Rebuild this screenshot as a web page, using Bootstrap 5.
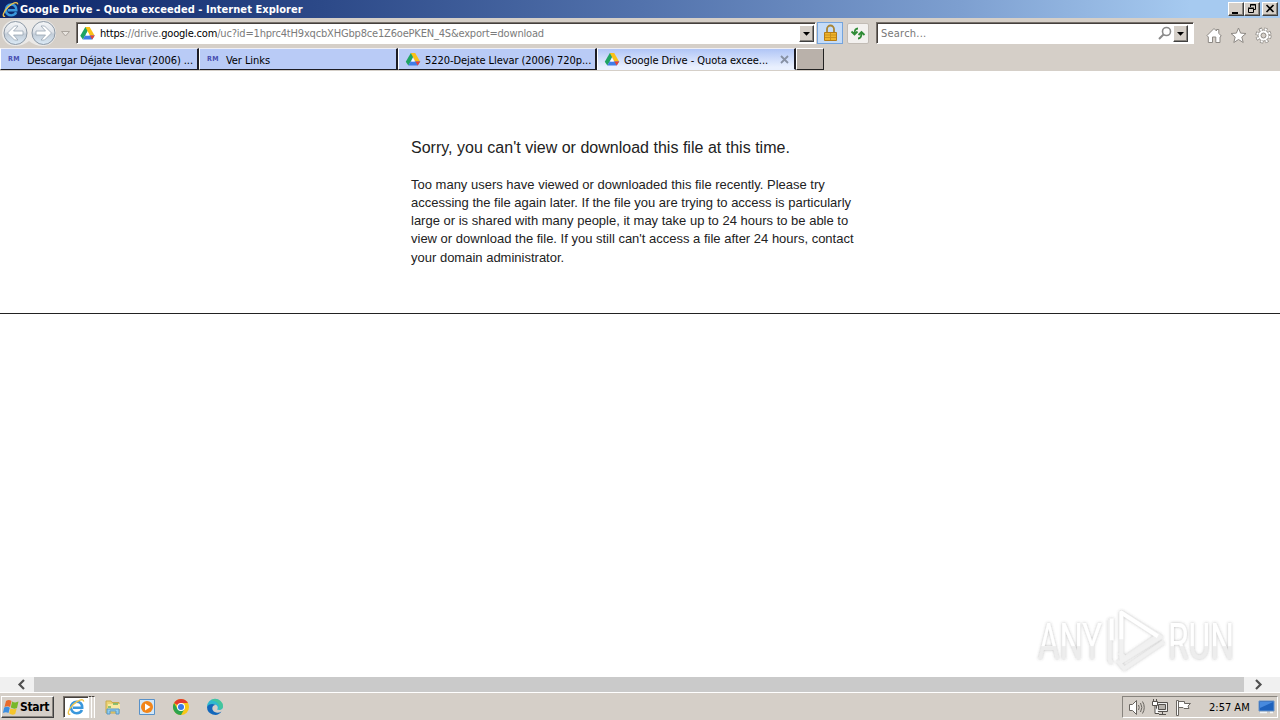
<!DOCTYPE html>
<html lang="en">

<head>
    <meta charset="UTF-8">
    <meta name="viewport" content="width=device-width, initial-scale=1.0">
    <title>Google Drive - Quota exceeded</title>
    <link href="https://cdn.jsdelivr.net/npm/bootstrap@5.3.0/dist/css/bootstrap.min.css" rel="stylesheet">
    <style>
        body {
            height: 720px;
            font: 11px/14px "DejaVu Sans Condensed", "DejaVu Sans", sans-serif;
            color: #000;
            background: #d5cfc8;
        }

        svg { display: block; flex: none; }

        /* title bar */
        .title-bar {
            height: 18px;
            padding: 0 2px 0 2px;
            background: linear-gradient(90deg, #0c2569 0%, #2c4988 25%, #5272ac 50%, #7d9fd0 75%, #a6caf0 93%);
        }
        .title-text { font-weight: bold; color: #fff; margin-left: 1px; padding-top: 1px; letter-spacing: .05px; }
        .raised {
            background: #d5cfc8;
            border: 1px solid;
            border-color: #fff #404040 #404040 #fff;
            box-shadow: inset -1px -1px #88847e;
            padding: 0;
            border-radius: 0;
        }
        .win-btn { width: 16px; height: 14px; }

        /* address row */
        .nav-row { height: 30px; padding-left: 2px; }
        .sunken {
            background: #fff;
            border: 1px solid;
            border-color: #77716b #fff #fff #77716b;
            box-shadow: inset 1px 1px #45403c;
            height: 22px;
        }
        .address { width: 740px; margin-left: 4px; padding: 1px 1px 1px 3px; }
        .address-text { color: #7b7b7b; margin-left: 5px; padding-top: 2px; letter-spacing: -.18px; }
        .drop-btn { width: 15px; height: 17px; }
        .search-box { width: 318px; margin-left: 7px; padding: 1px 2px 1px 4px; color: #777; }
        .search-hint { padding-top: 2px; letter-spacing: .22px; }
        .lock-btn { width: 26px; height: 22px; margin-left: 1px; background: #c5dcf8; border: 1px solid #74a4dd; }
        .refresh-btn { width: 22px; height: 21px; margin-left: 4px; background: #f3f1ef; border: 1px solid #c2bcb5; border-radius: 2px; }

        /* tabs */
        .tab-row { height: 23px; border-bottom: 1px solid #d5cfc8; }
        .page-tab {
            width: 199px;
            height: 22px;
            padding-left: 6px;
            background: #b9cbf6;
            border: solid;
            border-width: 1px 2px 1px 1px;
            border-color: #efeff5 #1c1c24 #1c1c24 #fff;
        }
        .page-tab.current {
            background: linear-gradient(#b0c5f6, #e9f0fe 90%);
            border-bottom-color: #e9f0fe;
        }
        .new-tab { width: 28px; height: 22px; background: #b9b1aa; border: 1px solid; border-color: #fff #222 #222 #fff; }
        .fav-rm { width: 16px; padding-left: 1px; font-size: 7px; font-weight: bold; letter-spacing: .4px; color: #474db0; line-height: 10px; }
        .tab-text { margin-left: 4px; padding-top: 3px; letter-spacing: -.07px; }

        /* page */
        .web-page { height: 606px; background: #fff; font-family: "Liberation Sans", Arial, sans-serif; color: #222; }
        .message { height: 243px; padding: 67px 0 0 411px; border-bottom: 1px solid #222; }
        .message-title { font-size: 16px; line-height: 20px; margin-bottom: 17.6px; letter-spacing: .015px; }
        .message-text { font-size: 13px; line-height: 18.3px; width: 460px; }
        .watermark { position: absolute; left: 1030px; top: 601px; }

        /* scrollbar */
        .h-scroll { height: 15px; background: #f0f0f0; }
        .h-scroll .arrow { width: 34px; padding-left: 13px; }
        .thumb { background: #cacaca; width: 1210px; }

        /* taskbar */
        .task-bar { height: 28px; padding: 3px 2px 0 1px; border-top: 1px solid #fff; }
        .start-btn { width: 53px; height: 22px; font-size: 12px; font-weight: bold; letter-spacing: -.3px; }
        .running { width: 26px; height: 22px; background: #fff; border: 1px solid; border-color: #77716b #fff #fff #77716b; box-shadow: inset 1px 1px #45403c; }
        .grip { width: 3px; height: 22px; background: #ddd8d2; border-right: 1px solid #fff; border-top: 1px solid #45403c; }
        .quick-launch { height: 22px; margin-left: 9px; gap: 16px; }
        .tray { width: 156px; height: 22px; padding: 0 2px 0 5px; border: 1px solid; border-color: #88847e #fff #fff #88847e; }
        .clock { margin-left: 17px; padding-top: 1px; }
    </style>
</head>

<body class="overflow-hidden">
    <!-- shared icons -->
    <svg width="0" height="0" class="position-absolute">
        <defs>
            <linearGradient id="ball" x2="0" y2="1">
                <stop offset="0" stop-color="#f4f6f8" />
                <stop offset=".45" stop-color="#e0e4ea" />
                <stop offset=".55" stop-color="#c2ccd7" />
                <stop offset="1" stop-color="#dcebf8" />
            </linearGradient>
            <symbol id="drive" viewBox="0 0 16 16">
                <path d="M5.700 1h4.600L5.600 10 3 14.500.3 10.500z" fill="#1fa463" />
                <path d="M5.700 1h4.600l5.400 9.500h-5z" fill="#fbc116" />
                <path d="M3 14.500l2.500-4.500h10.200L13 14.500z" fill="#3f7de8" />
                <path d="M10.500 10.200h5.200L13 14.500z" fill="#e84335" />
                <path d="M8 6.500l2 3.700H6z" fill="#fff" />
            </symbol>
            <symbol id="ie" viewBox="0 0 18 18">
                <path d="M15 12c-.9 2-2.900 3.200-5.300 3.200-3.300 0-5.700-2.400-5.700-5.700s2.400-5.700 5.700-5.700c3.600 0 5.700 2.500 5.500 6H6" fill="none" stroke="#3a97dc" stroke-width="2.600" />
                <path d="M5.200 8.200c.8-2.400 2.300-3.500 4.500-3.500" fill="none" stroke="#8ed4fb" stroke-width="1" />
                <path d="M3.300 16.300C-.3 17 1.200 11.500 6 6.800 10.500 2.300 16.800-.2 16.600 3.600" fill="none" stroke="#efc34a" stroke-width="1.400" />
            </symbol>
        </defs>
    </svg>

    <div class="title-bar d-flex align-items-center">
        <svg width="17" height="17"><use href="#ie" /></svg>
        <span class="title-text text-nowrap">Google Drive - Quota exceeded - Internet Explorer</span>
        <div class="d-flex ms-auto">
            <div class="raised win-btn"><svg width="14" height="12"><path d="M3 9h6v2H3z" /></svg></div>
            <div class="raised win-btn"><svg width="14" height="12"><path d="M5.500 4V1.500h5v5H9M5 2h6M3.500 5.500h5v4h-5zM3 5h6" fill="none" stroke="#000" /></svg></div>
            <div class="raised win-btn" style="margin-left: 2px"><svg width="14" height="12"><path d="M3.500 2l7 7m0-7l-7 7" stroke="#000" stroke-width="1.600" /></svg></div>
        </div>
    </div>

    <div class="nav-row d-flex align-items-center">
        <svg width="70" height="28" viewBox="0 0 70 28">
            <path d="M13 1h28a13 13 0 0 1 0 26q-8 0-14-5-6 5-14 5a13 13 0 0 1 0-26z" fill="#ebe9e7" />
            <g fill="url(#ball)" stroke="#8d99a6">
                <circle cx="13.500" cy="14" r="11.500" />
                <circle cx="41.500" cy="14" r="11.500" />
            </g>
            <g fill="#fff" stroke="#98a5b2" stroke-width=".8">
                <path d="M5.500 14l7-7H16L11.500 12H21v4h-9.500l4.500 5h-3.500z" />
                <path d="M49.500 14l-7-7H39l4.500 5H34v4h9.500L39 21h3.500z" />
            </g>
            <path d="M59.500 12.500h8l-4 4.500z" fill="#e8e4df" stroke="#aaa49d" />
        </svg>
        <div class="sunken address d-flex align-items-center">
            <svg width="15" height="15"><use href="#drive" /></svg>
            <span class="address-text text-nowrap"><span class="text-black">https</span>://drive.<span class="text-black">google.com</span>/uc?id=1hprc4tH9xqcbXHGbp8ce1Z6oePKEN_4S&amp;export=download</span>
            <div class="raised drop-btn ms-auto"><svg width="13" height="15"><path d="M3 6h7L6.500 9.800z" /></svg></div>
        </div>
        <div class="lock-btn d-flex justify-content-center align-items-center">
            <svg width="15" height="18" viewBox="0 0 15 18">
                <path d="M4 9V5a3.500 3.500 0 0 1 7 0v4" fill="none" stroke="#a88535" stroke-width="1.800" />
                <path d="M1.500 8.500h12v8h-12z" fill="#efb52c" stroke="#b57c17" />
                <path d="M2 11h11M2 13.500h11M7.500 9v7" stroke="#cb911c" />
            </svg>
        </div>
        <div class="refresh-btn d-flex justify-content-center align-items-center">
            <svg width="16" height="15" viewBox="0 0 16 15" fill="none" stroke="#2f8c36" stroke-width="1.800">
                <path d="M8 2.500C5.500 2.500 4.500 4 4.500 8M1.500 5.500l3 3 3-3M8 12.500c2.500 0 3.500-1.500 3.500-5.500M8.500 9l3-3 3 3" />
            </svg>
        </div>
        <div class="sunken search-box d-flex align-items-center">
            <span class="search-hint">Search...</span>
            <svg class="ms-auto" width="14" height="15" viewBox="0 0 14 15" fill="none" stroke="#8a8a8a">
                <circle cx="8.500" cy="5.500" r="4" stroke-width="1.600" />
                <path d="M5.500 8.500l-4.500 4.500" stroke-width="2" />
            </svg>
            <div class="raised drop-btn" style="margin: 0 3px 0 1px"><svg width="13" height="15"><path d="M3 6h7L6.500 9.800z" /></svg></div>
        </div>
        <div class="d-flex ms-auto gap-2 pt-1 pe-2">
            <svg width="16" height="17" viewBox="0 0 16 17"><path d="M1 8.500L8 1.500l2.500 2.500V2.500h2.300v3.800L15.300 9l-1.300 1v5.500H9.800V10H6.500v5.500H2.300V10z" fill="#fff" stroke="#8d8984" /></svg>
            <svg width="17" height="17" viewBox="0 0 17 17"><path d="M8.500 1l2.100 5.100 5.400.4-4.200 3.500 1.400 5.500-4.700-3-4.700 3 1.400-5.500L1 6.500l5.400-.4z" fill="#fff" stroke="#8d8984" /></svg>
            <svg width="17" height="17" viewBox="0 0 17 17">
                <circle cx="8.500" cy="8.500" r="6.500" fill="none" stroke="#8d8984" stroke-width="3.200" stroke-dasharray="3 2.105" />
                <circle cx="8.500" cy="8.500" r="5.500" fill="#fff" stroke="#8d8984" />
                <circle cx="8.500" cy="8.500" r="6.300" fill="none" stroke="#fff" stroke-width="2" stroke-dasharray="2 2.948" stroke-dashoffset="-.5" />
                <circle cx="8.500" cy="8.500" r="2.500" fill="#d5cfc8" stroke="#8d8984" />
            </svg>
        </div>
    </div>

    <div class="tab-row d-flex">
        <div class="page-tab d-flex align-items-center">
            <span class="fav-rm">RM</span><span class="tab-text text-nowrap">Descargar Déjate Llevar (2006) ...</span>
        </div>
        <div class="page-tab d-flex align-items-center">
            <span class="fav-rm">RM</span><span class="tab-text">Ver Links</span>
        </div>
        <div class="page-tab d-flex align-items-center">
            <svg width="16" height="15"><use href="#drive" /></svg><span class="tab-text text-nowrap">5220-Dejate Llevar (2006) 720p...</span>
        </div>
        <div class="page-tab current d-flex align-items-center">
            <svg width="16" height="15"><use href="#drive" /></svg><span class="tab-text text-nowrap">Google Drive - Quota excee...</span>
            <svg class="ms-auto me-1" width="11" height="11"><path d="M2 2l7 7m0-7L2 9" stroke="#8791a3" stroke-width="1.800" /></svg>
        </div>
        <div class="new-tab"></div>
    </div>

    <main class="web-page">
        <div class="message">
            <p class="message-title">Sorry, you can't view or download this file at this time.</p>
            <p class="message-text mb-0">Too many users have viewed or downloaded this file recently. Please try<br>
                accessing the file again later. If the file you are trying to access is particularly<br>
                large or is shared with many people, it may take up to 24 hours to be able to<br>
                view or download the file. If you still can't access a file after 24 hours, contact<br>
                your domain administrator.</p>
        </div>
        <svg class="watermark" width="248" height="75" viewBox="0 0 248 75">
            <defs>
                <filter id="soft" x="-10%" y="-10%" width="120%" height="120%">
                    <feDropShadow dx="0" dy="0" stdDeviation="1.600" flood-color="#555" flood-opacity=".4" />
                </filter>
                <linearGradient id="fade" x2="0" y2="1">
                    <stop offset=".56" stop-color="#fff" />
                    <stop offset=".58" stop-color="#ededed" />
                </linearGradient>
            </defs>
            <g filter="url(#soft)" fill="url(#fade)" font-family="Roboto, sans-serif" font-size="50" font-weight="400">
                <text x="8" y="58" textLength="64" lengthAdjust="spacingAndGlyphs">ANY</text>
                <text x="138" y="58" textLength="66" lengthAdjust="spacingAndGlyphs">RUN</text>
            </g>
            <g transform="translate(3 -3) scale(.96 .98)">
                <g filter="url(#soft)" fill="none" stroke="#fff" stroke-linejoin="round">
                    <path d="M80 22v41q0 3 3 1.500M88 64l7 8 41-27M90 56l6 5 36-24" stroke="#f0f0f0" stroke-width="4" />
                    <path d="M92 15l41 25-41 25V15z" stroke="#f1f1f1" stroke-width="4" />
                    <path d="M82 21v22M92 42V15l38 24" stroke-width="4" />
                </g>
            </g>
        </svg>
    </main>

    <div class="h-scroll d-flex">
        <div class="arrow"><svg width="16" height="15"><path d="M11 3L6.500 7.500 11 12" fill="none" stroke="#505050" stroke-width="2.200" /></svg></div>
        <div class="thumb"></div>
        <div class="ps-1"><svg width="20" height="15"><path d="M8 3l4.500 4.500L8 12" fill="none" stroke="#505050" stroke-width="2.200" /></svg></div>
    </div>

    <div class="task-bar d-flex">
        <div class="raised start-btn d-flex align-items-center">
            <svg width="18" height="17" viewBox="0 0 17 17">
                <path d="M3.500 2q3-2 5.500.1L7.600 8Q5 6.400 2 8z" fill="#e96b2c" />
                <path d="M9.600 2.500q3 1.800 6.400.1L14.500 9q-3 1.500-6.200-.4z" fill="#78b82a" />
                <path d="M1.700 8.600q3-1.600 5.600.1L6 14Q3.500 12.300.4 14z" fill="#3b8ee0" />
                <path d="M8 9.200q3 1.800 6.200.3L12.700 15q-3 1.500-6-.5z" fill="#f5c52b" />
            </svg>
            <span>Start</span>
        </div>
        <div class="d-flex" style="margin-left: 9px">
            <div class="running d-flex justify-content-center align-items-center"><svg width="18" height="18"><use href="#ie" /></svg></div>
            <div class="grip"></div>
            <div class="grip"></div>
        </div>
        <div class="quick-launch d-flex align-items-center">
            <svg width="18" height="18" viewBox="0 0 18 18">
                <path d="M2 3h5l1 1.500h7V15H2z" fill="#ecd374" stroke="#c8aa4b" />
                <path d="M4 6h12v5H4z" fill="#fae9a2" />
                <path d="M4 9h3M9 6h5" stroke="#6ab466" stroke-width="1.500" />
                <path d="M3 16v-5h12v5h-3v-3H6v3z" fill="#91cdee" stroke="#5698c9" />
            </svg>
            <svg width="18" height="18" viewBox="0 0 18 18">
                <path d="M1.500 1.500h15v15h-15z" fill="#d2e7f8" stroke="#5891c8" />
                <circle cx="9" cy="9" r="6" fill="#f28519" />
                <path d="M7 5.500l5.500 3.500L7 12.500z" fill="#fff" />
            </svg>
            <svg width="18" height="18" viewBox="0 0 18 18">
                <circle cx="9" cy="9" r="8" fill="#f8c716" />
                <path d="M9 9L2.070 5A8 8 0 0 1 15.930 5H9z" fill="#e33b2e" />
                <path d="M2.070 5A8 8 0 0 0 9 17l3.460-6L9 9 5.540 11z" fill="#2da44e" />
                <circle cx="9" cy="9" r="4" fill="#fff" />
                <circle cx="9" cy="9" r="3" fill="#3979e8" />
            </svg>
            <svg width="18" height="18" viewBox="0 0 18 18">
                <path d="M1 9a8 8 0 0 1 16-.5c.2 3-3 4.200-6 3 1.500-1.500 1-4.500-2.500-5C5 6 2 7.500 1 9z" fill="#2fb9ce" />
                <path d="M1 9c1-3 6-4 8.500-2-3 0-4 3-2.500 5.500 1.500 2.300 5 3 8.500 1A8 8 0 0 1 1 9z" fill="#1267bb" />
                <path d="M9 1c5 0 8.500 4 8 7.500-.3 2-2 3-4 3C15 6 10 3 5 2.200 6 1.400 7.500 1 9 1z" fill="#4fcb83" opacity=".65" />
            </svg>
        </div>
        <div class="tray d-flex align-items-center ms-auto">
            <svg width="19" height="17" viewBox="0 0 19 17" fill="none" stroke="#68645f">
                <path d="M1.500 5.500h3l4-4v14l-4-4h-3z" fill="#fff" />
                <path d="M10.500 6q1.500 2.500 0 5M12.500 4q2.800 4.500 0 9M14.500 2.500q3.500 6 0 12" />
            </svg>
            <svg class="ms-1" width="18" height="17" viewBox="0 0 18 17" fill="none" stroke="#55514d">
                <path d="M5.500 3.500h11v9h-11zM8 15.500h7M11.500 13v2" fill="#eee" />
                <path d="M7.500 5.500h7v5h-7z" fill="#b7b3ae" />
                <path d="M1.500 2.500h5v4h-5zM2.500 0v2M5.500 0v2M4 7v7.500h4" fill="#fff" />
            </svg>
            <svg style="margin-left: 6px" width="17" height="17" viewBox="0 0 17 17">
                <path d="M1.500 1.500h2v15h-2zM3.500 2.500h6v2h6L13 7l1 2.500H9l-1-1H3.500z" fill="#fff" stroke="#6b6762" />
            </svg>
            <span class="clock text-nowrap">2:57 AM</span>
            <svg class="ms-auto" width="17" height="16" viewBox="0 0 17 16">
                <path d="M1 2h15v10H1z" fill="#1e62bd" stroke="#6692c9" />
                <path d="M2 3h13L2 9z" fill="#478ade" />
                <path d="M2 13.500h7M12 13.500h3" stroke="#f2f5f8" stroke-width="1.500" />
            </svg>
        </div>
    </div>

    <script src="https://cdn.jsdelivr.net/npm/bootstrap@5.3.0/dist/js/bootstrap.bundle.min.js"></script>
</body>

</html>
